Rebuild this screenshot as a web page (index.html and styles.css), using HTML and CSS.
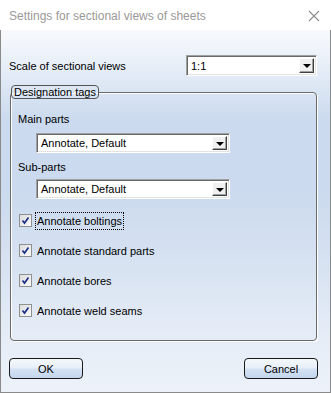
FILE: index.html
```html
<html>
   <head>
      <title>Settings for sectional views of sheets</title>
      <link rel="stylesheet" href="styles.css">
   </head>
   <body>
      <div class="window">
         <div class="titlebar">
            <span class="title">Settings for sectional views of sheets</span>
            <svg class="close" width="12" height="12" viewBox="0 0 12 12">
               <path d="M1 1L11 11M11 1L1 11" stroke="#8c8c8c" stroke-width="1.1" fill="none"></path>
            </svg>
         </div>
         <div class="client">
            <div class="scale-row">
               <span class="label">Scale of sectional views</span>
               <div class="combo scale">
                  <span class="value">1:1</span>
                  <span class="drop"><i class="tri"></i></span>
               </div>
            </div>
            <fieldset class="group">
               <legend>Designation tags</legend>
               <div class="field-label main">Main parts</div>
               <div class="combo wide">
                  <span class="value">Annotate, Default</span>
                  <span class="drop"><i class="tri"></i></span>
               </div>
               <div class="field-label sub">Sub-parts</div>
               <div class="combo wide">
                  <span class="value">Annotate, Default</span>
                  <span class="drop"><i class="tri"></i></span>
               </div>
               <div class="checks">
                  <div class="check">
                     <span class="box"><svg width="11" height="11" viewBox="0 0 11 11"><path d="M2.5 5.5L4.5 8L8.5 2.5" stroke="#1a2f86" stroke-width="1.7" fill="none"></path></svg></span>
                     <span class="text focus">Annotate boltings</span>
                  </div>
                  <div class="check">
                     <span class="box"><svg width="11" height="11" viewBox="0 0 11 11"><path d="M2.5 5.5L4.5 8L8.5 2.5" stroke="#1a2f86" stroke-width="1.7" fill="none"></path></svg></span>
                     <span class="text">Annotate standard parts</span>
                  </div>
                  <div class="check">
                     <span class="box"><svg width="11" height="11" viewBox="0 0 11 11"><path d="M2.5 5.5L4.5 8L8.5 2.5" stroke="#1a2f86" stroke-width="1.7" fill="none"></path></svg></span>
                     <span class="text">Annotate bores</span>
                  </div>
                  <div class="check">
                     <span class="box"><svg width="11" height="11" viewBox="0 0 11 11"><path d="M2.5 5.5L4.5 8L8.5 2.5" stroke="#1a2f86" stroke-width="1.7" fill="none"></path></svg></span>
                     <span class="text">Annotate weld seams</span>
                  </div>
               </div>
            </fieldset>
            <div class="buttons">
               <button class="btn">OK</button>
               <button class="btn">Cancel</button>
            </div>
         </div>
      </div>
   </body>
</html>
```
FILE: styles.css
```css
*{
   box-sizing: border-box;
}
body{
   margin: 0;
   font-family: 'Liberation Sans', Arial, sans-serif;
   font-size: 11px;
   color: #000;
}
.window{
   width: 331px;
   height: 393px;
   display: flex;
   flex-direction: column;
   background: #fff;
}
.titlebar{
   height: 30px;
   display: flex;
   align-items: center;
   justify-content: space-between;
   padding: 2px 11px 0 9px;
}
.title{
   font-family: 'Liberation Sans', Arial, sans-serif;
   font-size: 12px;
   color: #999;
}
.client{
   flex: 1;
   display: flex;
   flex-direction: column;
   border: 1px solid #8a8a8a;
   border-top: none;
   padding: 0 13px 0 8px;
   background: linear-gradient(to bottom, #f8fafd 0, #e2ebf6 45px, #cbdaee 90px, #cbdaee 160px, #d8e3f2 240px, #e6edf7 310px, #edf2f9 362px);
}
.scale-row{
   display: flex;
   align-items: center;
   justify-content: space-between;
   margin-top: 25px;
   height: 21px;
}
.combo{
   display: flex;
   align-items: center;
   height: 21px;
   background: #fff;
   border: 1px solid;
   border-color: #a0a0a0 #fff #fff #a0a0a0;
   box-shadow: inset 1px 1px 0 #696969, inset -1px -1px 0 #e3e3e3;
   padding: 2px 2px 2px 4px;
}
.combo.scale{
   width: 131px;
}
.combo.wide{
   width: 194px;
   height: 20px;
   margin-left: 18px;
}
.value{
   flex: 1;
}
.drop{
   width: 15px;
   height: 100%;
   display: flex;
   align-items: center;
   justify-content: center;
   background: #f0f0f0;
   border: 1px solid;
   border-color: #fff #404040 #404040 #fff;
   box-shadow: inset -1px -1px 0 #a0a0a0;
}
.tri{
   width: 0;
   height: 0;
   border-left: 4px solid transparent;
   border-right: 4px solid transparent;
   border-top: 4px solid #000;
   margin-top: 1px;
}
.group{
   margin: 9px 0 0 1px;
   width: 307px;
   height: 256px;
   padding: 0 0 0 7px;
   border: 1px solid #6a6a6a;
   border-radius: 4px;
   box-shadow: 1px 1px 0 #fff, inset 1px 1px 0 #fff;
}
.group legend{
   margin-left: -7px;
   padding: 0 2px;
   line-height: 12px;
   border: 1px solid #555;
   border-radius: 4px;
}
.field-label{
   line-height: 13px;
}
.field-label.main{
   margin-top: 14px;
   margin-bottom: 7px;
}
.field-label.sub{
   margin-top: 8px;
   margin-bottom: 5px;
}
.checks{
   margin-top: 12px;
   display: flex;
   flex-direction: column;
   gap: 11px;
}
.check{
   display: flex;
   align-items: center;
   height: 19px;
}
.box{
   width: 13px;
   height: 13px;
   margin-left: 1px;
   border: 1px solid #8e8f8f;
   background: linear-gradient(to bottom right, #dcdcdc, #fbfbfb);
   display: flex;
   align-items: center;
   justify-content: center;
}
.text{
   margin-left: 3px;
   padding: 2px 1px;
   border: 1px dotted transparent;
}
.text.focus{
   border-color: #000;
}
.buttons{
   display: flex;
   justify-content: space-between;
   margin-top: 17px;
   margin-right: -1px;
}
.btn{
   width: 74px;
   height: 21px;
   font-family: 'Liberation Sans', Arial, sans-serif;
   font-size: 11px;
   color: #000;
   border: 1px solid #1a1a1a;
   border-radius: 4px;
   padding: 0;
   background: linear-gradient(to bottom, #f4f8fc 0, #e8eff8 45%, #d3e1f2 55%, #c4d6ee 100%);
}
```
